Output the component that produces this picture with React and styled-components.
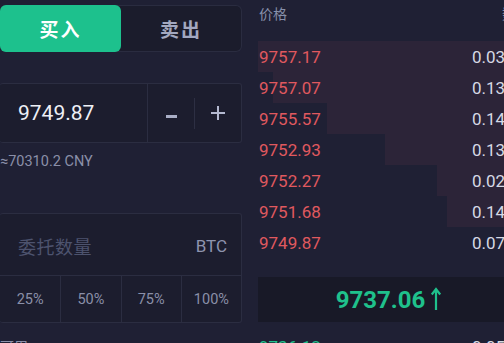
import React from 'react';
import styled, { createGlobalStyle } from 'styled-components';

//----------------------------------------------> GLOBAL
const GlobalStyle = createGlobalStyle`
    html, body {
        margin: 0;
        padding: 0;
        background: #1f2034;
        overflow: hidden;
        width: 504px;
        height: 343px;
    }
    body {
        font-family: Roboto, "Noto Sans CJK SC", sans-serif;
    }
`;

const asks = [
    { price: '9757.17', qty: '0.0314', depth: 262 },
    { price: '9757.07', qty: '0.1352', depth: 247 },
    { price: '9755.57', qty: '0.1420', depth: 193 },
    { price: '9752.93', qty: '0.1318', depth: 135 },
    { price: '9752.27', qty: '0.0265', depth: 83 },
    { price: '9751.68', qty: '0.1471', depth: 73 },
    { price: '9749.87', qty: '0.0708', depth: 0 },
];

const percents = ['25%', '50%', '75%', '100%'];

//----------------------------------------------> TRADE PAGE
export default class App extends React.Component {
    render(){
        return(
            <Page>
                <GlobalStyle />
                <LeftCol>
                    <Tabs>
                        <Tab active>买入</Tab>
                        <Tab>卖出</Tab>
                    </Tabs>
                    <PriceInput>
                        <InputValue>9749.87</InputValue>
                        <Stepper>
                            <StepBtn><Minus /></StepBtn>
                            <StepDivider />
                            <StepBtn>
                                <svg width="16" height="16" viewBox="0 0 16 16">
                                    <path d="M8 1v14M1 8h14" stroke="#b4b9d0" strokeWidth="2" />
                                </svg>
                            </StepBtn>
                        </Stepper>
                    </PriceInput>
                    <Approx>≈70310.2 CNY</Approx>
                    <AmountBox>
                        <AmountRow>
                            <Placeholder>委托数量</Placeholder>
                            <Unit>BTC</Unit>
                        </AmountRow>
                        <PercentRow>
                            {percents.map((p) => <PercentCell key={p}>{p}</PercentCell>)}
                        </PercentRow>
                    </AmountBox>
                    <Available>可用</Available>
                </LeftCol>
                <RightCol>
                    <BookHeader>
                        <span>价格</span>
                        <span>数量</span>
                    </BookHeader>
                    <Book>
                        {asks.map((a) => (
                            <BookRow key={a.price}>
                                {a.depth > 0 && <DepthBar style={{ width: a.depth }} />}
                                <Price>{a.price}</Price>
                                <Qty>{a.qty}</Qty>
                            </BookRow>
                        ))}
                    </Book>
                    <LastPrice>
                        9737.06
                        <svg width="12" height="24" viewBox="0 0 12 24">
                            <path d="M6 23V2.5M1.8 7.5L6 2 10.2 7.5" stroke="#1fc18c" strokeWidth="2.2" fill="none" />
                        </svg>
                    </LastPrice>
                    <BookRow>
                        <Price buy>9736.12</Price>
                        <Qty>0.0512</Qty>
                    </BookRow>
                </RightCol>
            </Page>
        );
    };
};

const Page = styled.div`
    display: flex;
    align-items: flex-start;
    gap: 16px;
    width: 520px;
`;

const LeftCol = styled.div`
    width: 242px;
    flex-shrink: 0;
    display: flex;
    flex-direction: column;
    padding-top: 5px;
    > * {
        flex-shrink: 0;
    }
`;

const Tabs = styled.div`
    display: flex;
    height: 47px;
    box-sizing: border-box;
    border: 1px solid #2a2c40;
    border-left: none;
    border-radius: 6px;
    background: #1b1c2c;
`;

const Tab = styled.div`
    width: ${p => p.active ? '121px' : 'auto'};
    flex: ${p => p.active ? 'none' : '1'};
    margin: -1px 0;
    display: flex;
    align-items: center;
    justify-content: center;
    border-radius: 6px;
    background: ${p => p.active ? '#1dc18d' : 'transparent'};
    color: ${p => p.active ? '#ffffff' : '#a3a8c0'};
    font-size: 19px;
    font-weight: 700;
    letter-spacing: 2px;
`;

const PriceInput = styled.div`
    margin-top: 31px;
    height: 60px;
    box-sizing: border-box;
    border: 1px solid #2b2d41;
    border-left: none;
    border-radius: 3px;
    background: #1c1d2e;
    display: flex;
`;

const InputValue = styled.div`
    width: 148px;
    border-right: 1px solid #2b2d41;
    display: flex;
    align-items: center;
    padding-left: 18px;
    box-sizing: border-box;
    color: #eef0f6;
    font-size: 21px;
`;

const Stepper = styled.div`
    flex: 1;
    display: flex;
    align-items: center;
`;

const StepBtn = styled.div`
    flex: 1;
    display: flex;
    align-items: center;
    justify-content: center;
`;

const Minus = styled.span`
    display: block;
    width: 11px;
    height: 3px;
    margin-top: 6px;
    background: #a9aec6;
`;

const StepDivider = styled.div`
    width: 1px;
    height: 31px;
    background: #2d2f43;
`;

const Approx = styled.div`
    margin-top: 11px;
    color: #8a8fa8;
    font-size: 14.5px;
    line-height: 16px;
`;

const AmountBox = styled.div`
    margin-top: 43px;
    border: 1px solid #2b2d41;
    border-left: none;
    border-radius: 3px;
    background: #1c1d2e;
`;

const AmountRow = styled.div`
    height: 59px;
    display: flex;
    align-items: center;
    justify-content: space-between;
    padding: 2px 14px 0 18px;
    border-bottom: 1px solid #2b2d41;
`;

const Placeholder = styled.span`
    color: #4d536e;
    font-size: 18px;
    letter-spacing: 0.5px;
`;

const Unit = styled.span`
    color: #8e94ae;
    font-size: 17px;
`;

const PercentRow = styled.div`
    display: grid;
    grid-template-columns: repeat(4, 1fr);
    height: 46px;
`;

const PercentCell = styled.div`
    display: flex;
    align-items: center;
    justify-content: center;
    color: #8a8fa8;
    font-size: 14.5px;
    border-left: 1px solid #2b2d41;
    &:first-child {
        border-left: none;
    }
`;

const Available = styled.div`
    margin-top: 13px;
    color: #8a8fa8;
    font-size: 14px;
`;

const RightCol = styled.div`
    width: 262px;
    flex-shrink: 0;
    display: flex;
    flex-direction: column;
    > * {
        flex-shrink: 0;
    }
`;

const BookHeader = styled.div`
    height: 41px;
    display: flex;
    justify-content: space-between;
    align-items: flex-start;
    padding-top: 3px;
    padding-left: 1px;
    box-sizing: border-box;
    color: #8790aa;
    font-size: 14px;
    > span:last-child {
        margin-right: -10px;
    }
`;

const Book = styled.div`
    display: flex;
    flex-direction: column;
`;

const BookRow = styled.div`
    position: relative;
    height: 31px;
    display: grid;
    grid-template-columns: 213px 1fr;
    align-items: center;
    padding-left: 1px;
`;

const DepthBar = styled.div`
    position: absolute;
    top: 0;
    right: 0;
    bottom: 0;
    background: #2c2438;
`;

const Price = styled.span`
    position: relative;
    color: ${p => p.buy ? '#1fc18c' : '#e0595f'};
    font-size: 17px;
`;

const Qty = styled.span`
    position: relative;
    color: #d6d9e4;
    font-size: 17px;
`;

const LastPrice = styled.div`
    margin: 19px 0 9px;
    height: 45px;
    background: #181927;
    display: flex;
    align-items: center;
    justify-content: center;
    gap: 5px;
    color: #1fc18c;
    font-size: 24px;
    font-weight: 700;
    > svg {
        margin-top: -2px;
    }
`;
